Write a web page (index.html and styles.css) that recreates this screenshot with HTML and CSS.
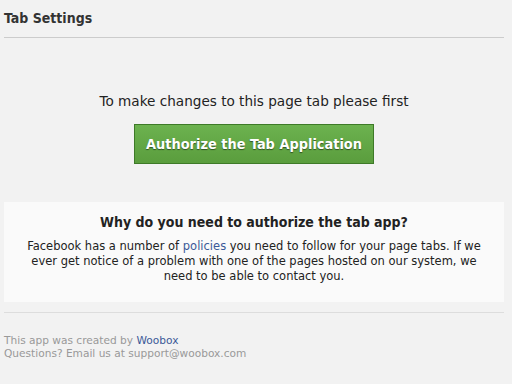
FILE: index.html
```html
<!DOCTYPE html>
<html lang="en">
  <head>
    <meta charset="UTF-8" />
    <title>Tab Settings</title>
    <link rel="stylesheet" href="styles.css">
  </head>
  <body>
    <header class="page-title">Tab Settings</header>

    <div class="authorize">
      <p class="intro">To make changes to this page tab please first</p>
      <a href="#" class="auth-btn">Authorize the Tab Application</a>
    </div>

    <div class="why-box">
      <h2>Why do you need to authorize the tab app?</h2>
      <p>
        Facebook has a number of <a href="#">policies</a> you need to follow for your page tabs. If we
        ever get notice of a problem with one of the pages hosted on our system, we
        need to be able to contact you.
      </p>
    </div>

    <footer class="credits">
      This app was created by <a href="#">Woobox</a><br />
      Questions? Email us at support@woobox.com
    </footer>
  </body>
</html>
```

FILE: styles.css
```css
body {
  font-family: "DejaVu Sans", Verdana, sans-serif;
  margin: 0;
  padding: 0 8px 0 4px;
  background-color: #f2f2f2;
  color: #333;
}

.page-title {
  font-family: "DejaVu Sans Condensed", "DejaVu Sans", sans-serif;
  font-size: 14px;
  line-height: 17px;
  font-weight: bold;
  padding: 10px 0 10px;
  border-bottom: 1px solid #ccc;
}

.authorize {
  text-align: center;
  padding-top: 55px;
}

.intro {
  margin: 0;
  font-size: 13.6px;
  line-height: 17px;
  color: #222;
}

.auth-btn {
  display: inline-block;
  margin-top: 14px;
  padding: 11px 11px 10px;
  font-family: "DejaVu Sans Condensed", "DejaVu Sans", sans-serif;
  font-size: 14.4px;
  line-height: 17px;
  font-weight: bold;
  color: #fff;
  text-decoration: none;
  text-shadow: 0 1px 1px rgba(0, 0, 0, 0.5);
  background: linear-gradient(#6cb24f, #5a9d3d);
  border: 1px solid #3e7a28;
}

.why-box {
  margin-top: 38px;
  background-color: #fafafa;
  text-align: center;
  padding: 12px 15px 18px;
}

.why-box h2 {
  margin: 0 0 8px;
  font-family: "DejaVu Sans Condensed", "DejaVu Sans", sans-serif;
  font-size: 14px;
  line-height: 17px;
  font-weight: bold;
  color: #222;
}

.why-box p {
  margin: 0;
  font-size: 11.5px;
  line-height: 15px;
  color: #222;
}

.why-box a,
.credits a {
  color: #3b5998;
  text-decoration: none;
}

.credits {
  margin-top: 10px;
  border-top: 1px solid #ddd;
  padding-top: 21px;
  font-size: 10.6px;
  line-height: 13px;
  color: #999;
}
```
